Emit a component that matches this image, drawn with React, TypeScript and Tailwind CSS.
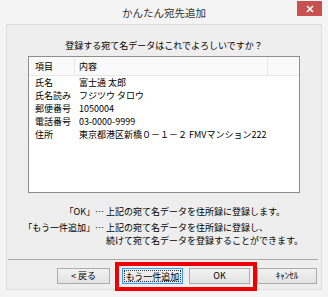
import React from "react";

const font = { fontFamily: '"Noto Sans CJK JP", "Noto Sans", sans-serif' };

const rows: [string, string][] = [
  ["氏名", "富士通 太郎"],
  ["氏名読み", "フジツウ タロウ"],
  ["郵便番号", "1050004"],
  ["電話番号", "03-0000-9999"],
  ["住所", "東京都港区新橋０－１－２ FMVマンション222"],
];

export default function App() {
  return (
    <div
      className="relative w-[328px] h-[297px] bg-[#f4f4f4] text-black overflow-hidden"
      style={font}
    >
      {/* title bar */}
      <div className="h-[24px] flex items-center justify-center text-[10.5px] leading-[13px] text-[#333]">
        かんたん宛先追加
      </div>
      <div className="absolute left-[297px] top-[1px] w-[25px] h-[15px] bg-[#c75050] flex items-center justify-center">
        <svg width="8" height="8" viewBox="0 0 8 8">
          <path d="M1 1L7 7M7 1L1 7" stroke="#fff" strokeWidth="1.6" />
        </svg>
      </div>

      {/* client area */}
      <div className="ml-[6px] w-[316px] h-[266px] border border-[#dddddd] bg-[#eeeeee] text-[9px]">
        <div className="mt-[14px] h-[13px] leading-[13px] text-center">
          登録する宛て名データはこれでよろしいですか？
        </div>

        {/* list box */}
        <div className="mt-[4px] ml-[21px] w-[272px] h-[137px] border border-[#8e8e8e] bg-white">
          <div className="flex h-[19px] bg-[#fafafa] border-b border-[#e8e8e8] leading-[19px]">
            <div className="w-[46px] pl-[6px] border-r border-[#e8e8e8]">項目</div>
            <div className="w-[193px] pl-[4px] border-r border-[#e8e8e8]">内容</div>
            <div className="flex-1" />
          </div>
          <div>
            {rows.map(([k, v]) => (
              <div key={k} className="flex h-[13px] leading-[13px]">
                <div className="w-[46px] pl-[6px] whitespace-nowrap">{k}</div>
                <div className="pl-[4px] whitespace-nowrap">{v}</div>
              </div>
            ))}
          </div>
        </div>

        {/* notes */}
        <div className="mt-[12px] leading-[13px]">
          <div className="flex">
            <div className="w-[97px] text-right whitespace-nowrap">「OK」⋯</div>
            <div className="pl-[2px] whitespace-nowrap">上記の宛て名データを住所録に登録します。</div>
          </div>
          <div className="flex mt-[3px]">
            <div className="w-[97px] text-right whitespace-nowrap">「もう一件追加」⋯</div>
            <div className="pl-[2px] whitespace-nowrap">
              <div>上記の宛て名データを住所録に登録し、</div>
              <div>続けて宛て名データを登録することができます。</div>
            </div>
          </div>
        </div>

        <div className="mt-[12px] ml-[1px] w-[310px] h-px bg-[#a8a8a8]" />

        {/* buttons */}
        <div className="mt-[8px] flex h-[16px] leading-[14px]">
          <button className="ml-[50px] w-[53px] h-[16px] border border-[#acacac] bg-gradient-to-b from-[#f2f2f2] to-[#e3e3e3] text-[9px] text-center">
            &lt; 戻る
          </button>
          <button className="ml-[12px] w-[61px] h-[16px] border border-[#3399ff] bg-gradient-to-b from-[#f2f2f2] to-[#e3e3e3] text-[9px] text-center p-[1px]">
            <span className="block h-full border border-dotted border-[#333] leading-[12px]">もう一件追加</span>
          </button>
          <button className="ml-[6px] w-[61px] h-[16px] border border-[#acacac] bg-gradient-to-b from-[#f2f2f2] to-[#e3e3e3] text-[9px] text-center">
            OK
          </button>
          <button className="ml-[7px] w-[60px] h-[16px] border border-[#acacac] bg-gradient-to-b from-[#f2f2f2] to-[#e3e3e3] text-[9px] text-center">
            ｷｬﾝｾﾙ
          </button>
        </div>
      </div>

      {/* red annotation box */}
      <div className="absolute left-[115px] top-[262px] w-[142px] h-[29px] border-[4px] border-[#ee0000]" />
    </div>
  );
}
